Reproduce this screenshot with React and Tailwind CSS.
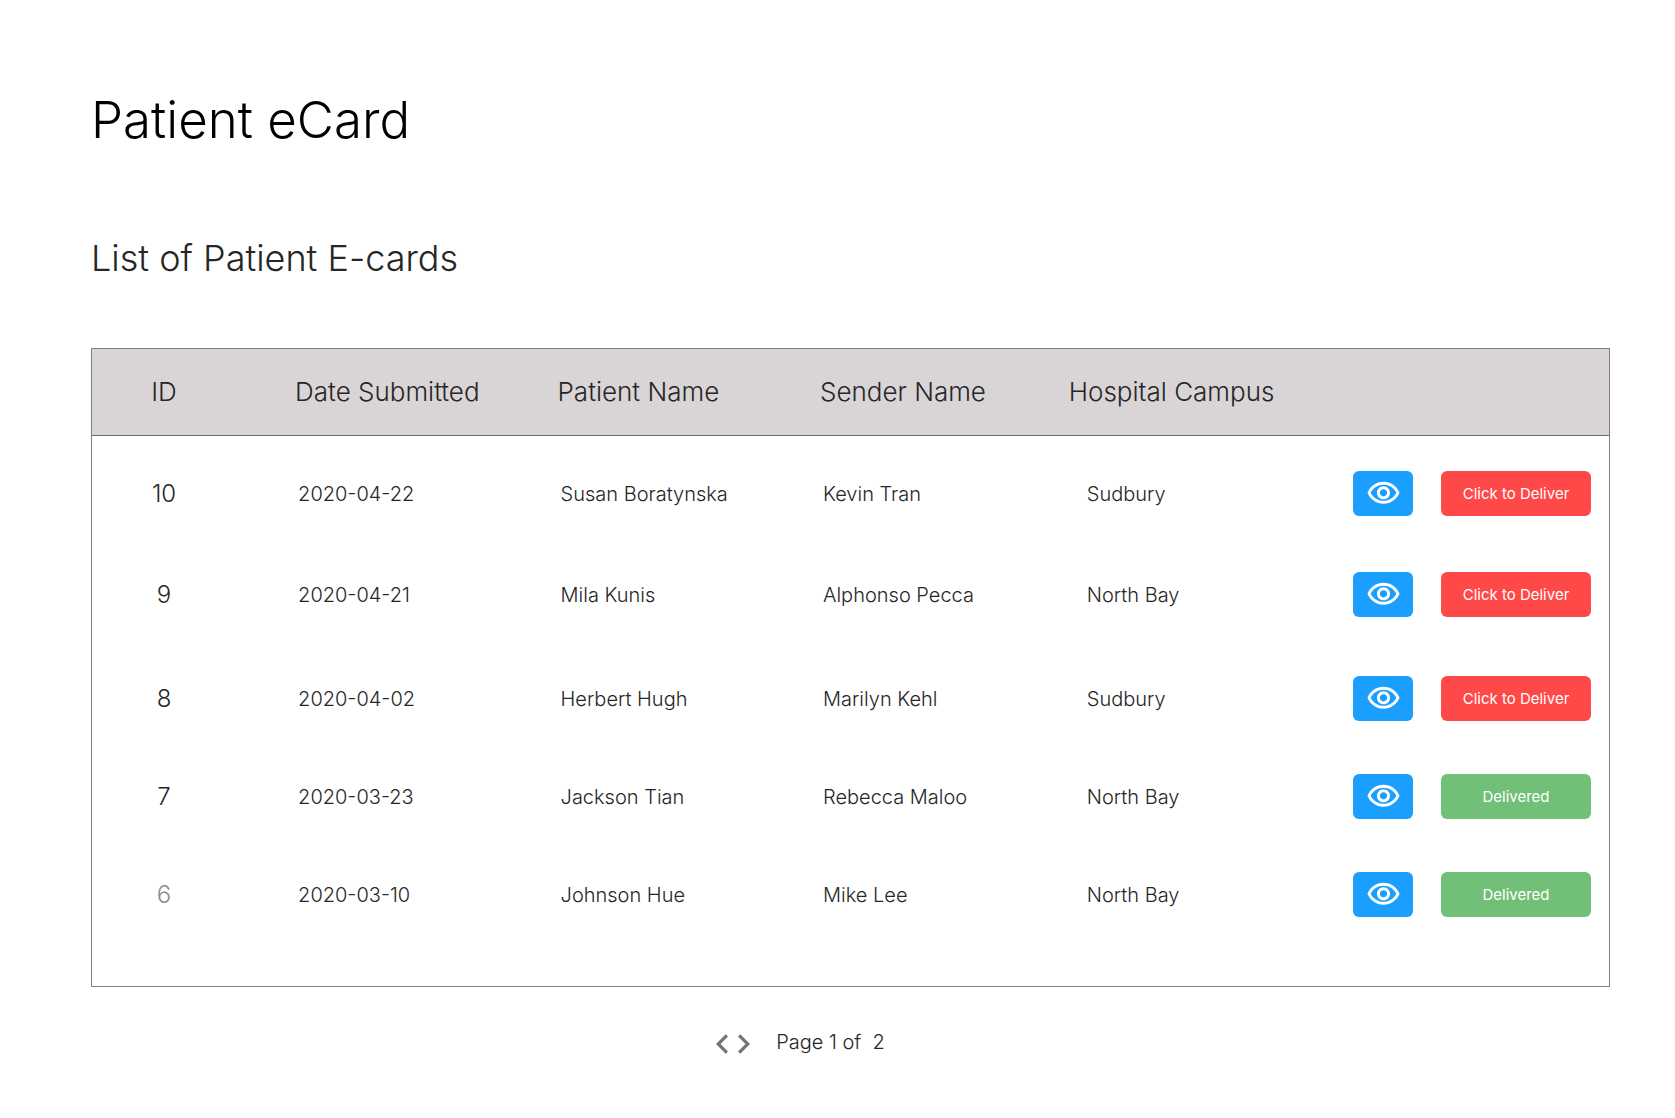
const cards = [
  { id: 10, date: "2020-04-22", patient: "Susan Boratynska", sender: "Kevin Tran", campus: "Sudbury", delivered: false, height: "h-[81px]" },
  { id: 9, date: "2020-04-21", patient: "Mila Kunis", sender: "Alphonso Pecca", campus: "North Bay", delivered: false, height: "h-[101px]" },
  { id: 8, date: "2020-04-02", patient: "Herbert Hugh", sender: "Marilyn Kehl", campus: "Sudbury", delivered: false, height: "h-[104px]" },
  { id: 7, date: "2020-03-23", patient: "Jackson Tian", sender: "Rebecca Maloo", campus: "North Bay", delivered: true, height: "h-[98px]" },
  { id: 6, date: "2020-03-10", patient: "Johnson Hue", sender: "Mike Lee", campus: "North Bay", delivered: true, muted: true, height: "h-[98px]" },
];

function EyeIcon() {
  return (
    <svg viewBox="0 0 24 24" className="size-[35px]" fill="currentColor" aria-hidden="true">
      <path d="M12 6c3.79 0 7.17 2.13 8.82 5.5C19.17 14.87 15.79 17 12 17s-7.17-2.13-8.82-5.5C4.83 8.13 8.21 6 12 6m0-2C7 4 2.73 7.11 1 11.5 2.73 15.89 7 19 12 19s9.27-3.11 11-7.5C21.27 7.11 17 4 12 4zm0 5c1.38 0 2.5 1.12 2.5 2.5S13.38 14 12 14s-2.5-1.12-2.5-2.5S10.62 9 12 9m0-2c-2.48 0-4.5 2.02-4.5 4.5S9.52 16 12 16s4.5-2.02 4.5-4.5S14.48 7 12 7z" />
    </svg>
  );
}

function CardRow({ card }) {
  return (
    <tr className={`${card.height} align-bottom text-xl leading-7`}>
      <td className={`pb-2 text-center text-2xl leading-7 ${card.muted ? "text-[#8c8c8c]" : ""}`}>{card.id}</td>
      <td className="pb-2 pl-[62px]">{card.date}</td>
      <td className="pb-2 pl-[62px]">{card.patient}</td>
      <td className="pb-2 pl-[62px]">{card.sender}</td>
      <td className="pb-2 pl-[77px]">{card.campus}</td>
      <td className="pr-[18px]">
        <div className="flex justify-end gap-7 text-white">
          <button type="button" aria-label={`View card ${card.id}`} className="flex h-[45px] w-[60px] items-center justify-center rounded-md bg-[#1a9fff]">
            <EyeIcon />
          </button>
          <button type="button" className={`h-[45px] w-[150px] rounded-md text-[15px] font-normal ${card.delivered ? "bg-[#72bf77]" : "bg-[#ff4949]"}`}>
            {card.delivered ? "Delivered" : "Click to Deliver"}
          </button>
        </div>
      </td>
    </tr>
  );
}

export default function App() {
  return (
    <main className="min-h-screen bg-white pr-[65px] pl-[91px] pt-[90px] font-['Inter',sans-serif] font-light text-[#262626]">
      <h1 className="text-[51px] leading-[60px] text-black">Patient eCard</h1>
      <h2 className="mt-[86px] text-[36px] leading-[44px]">List of Patient E-cards</h2>

      <section className="mt-[68px] border border-[#808080] pb-[69px]">
        <table className="w-full table-fixed border-collapse text-left">
          <colgroup>
            <col className="w-[9.5%]" />
            <col className="w-[17.3%]" />
            <col className="w-[17.3%]" />
            <col className="w-[16.4%]" />
            <col className="w-[20%]" />
            <col />
          </colgroup>
          <thead>
            <tr className="h-[86px] border-b border-[#6b696a] bg-[#d9d5d6] text-[26px]">
              <th className="text-center font-light">ID</th>
              <th className="pl-[59px] font-light whitespace-nowrap">Date Submitted</th>
              <th className="pl-[59px] font-light whitespace-nowrap">Patient Name</th>
              <th className="pl-[59px] font-light whitespace-nowrap">Sender Name</th>
              <th className="pl-[59px] font-light whitespace-nowrap">Hospital Campus</th>
              <td />
            </tr>
          </thead>
          <tbody>
            {cards.map((card) => (
              <CardRow key={card.id} card={card} />
            ))}
          </tbody>
        </table>
      </section>

      <nav aria-label="Pagination" className="mt-[41px] flex items-center justify-center gap-[26px] pr-[100px]">
        <div className="flex gap-[10px] pt-1 text-[#737373]">
          <button type="button" aria-label="Previous page">
            <svg viewBox="2 6 7.4 12" className="h-5 w-3" fill="currentColor" aria-hidden="true">
              <path d="M9.4 16.6L4.8 12l4.6-4.6L8 6l-6 6 6 6z" />
            </svg>
          </button>
          <button type="button" aria-label="Next page">
            <svg viewBox="14.6 6 7.4 12" className="h-5 w-3" fill="currentColor" aria-hidden="true">
              <path d="M14.6 16.6l4.6-4.6-4.6-4.6L16 6l6 6-6 6z" />
            </svg>
          </button>
        </div>
        <p className="text-xl leading-7 whitespace-pre">{"Page 1 of  2"}</p>
      </nav>
    </main>
  );
}
